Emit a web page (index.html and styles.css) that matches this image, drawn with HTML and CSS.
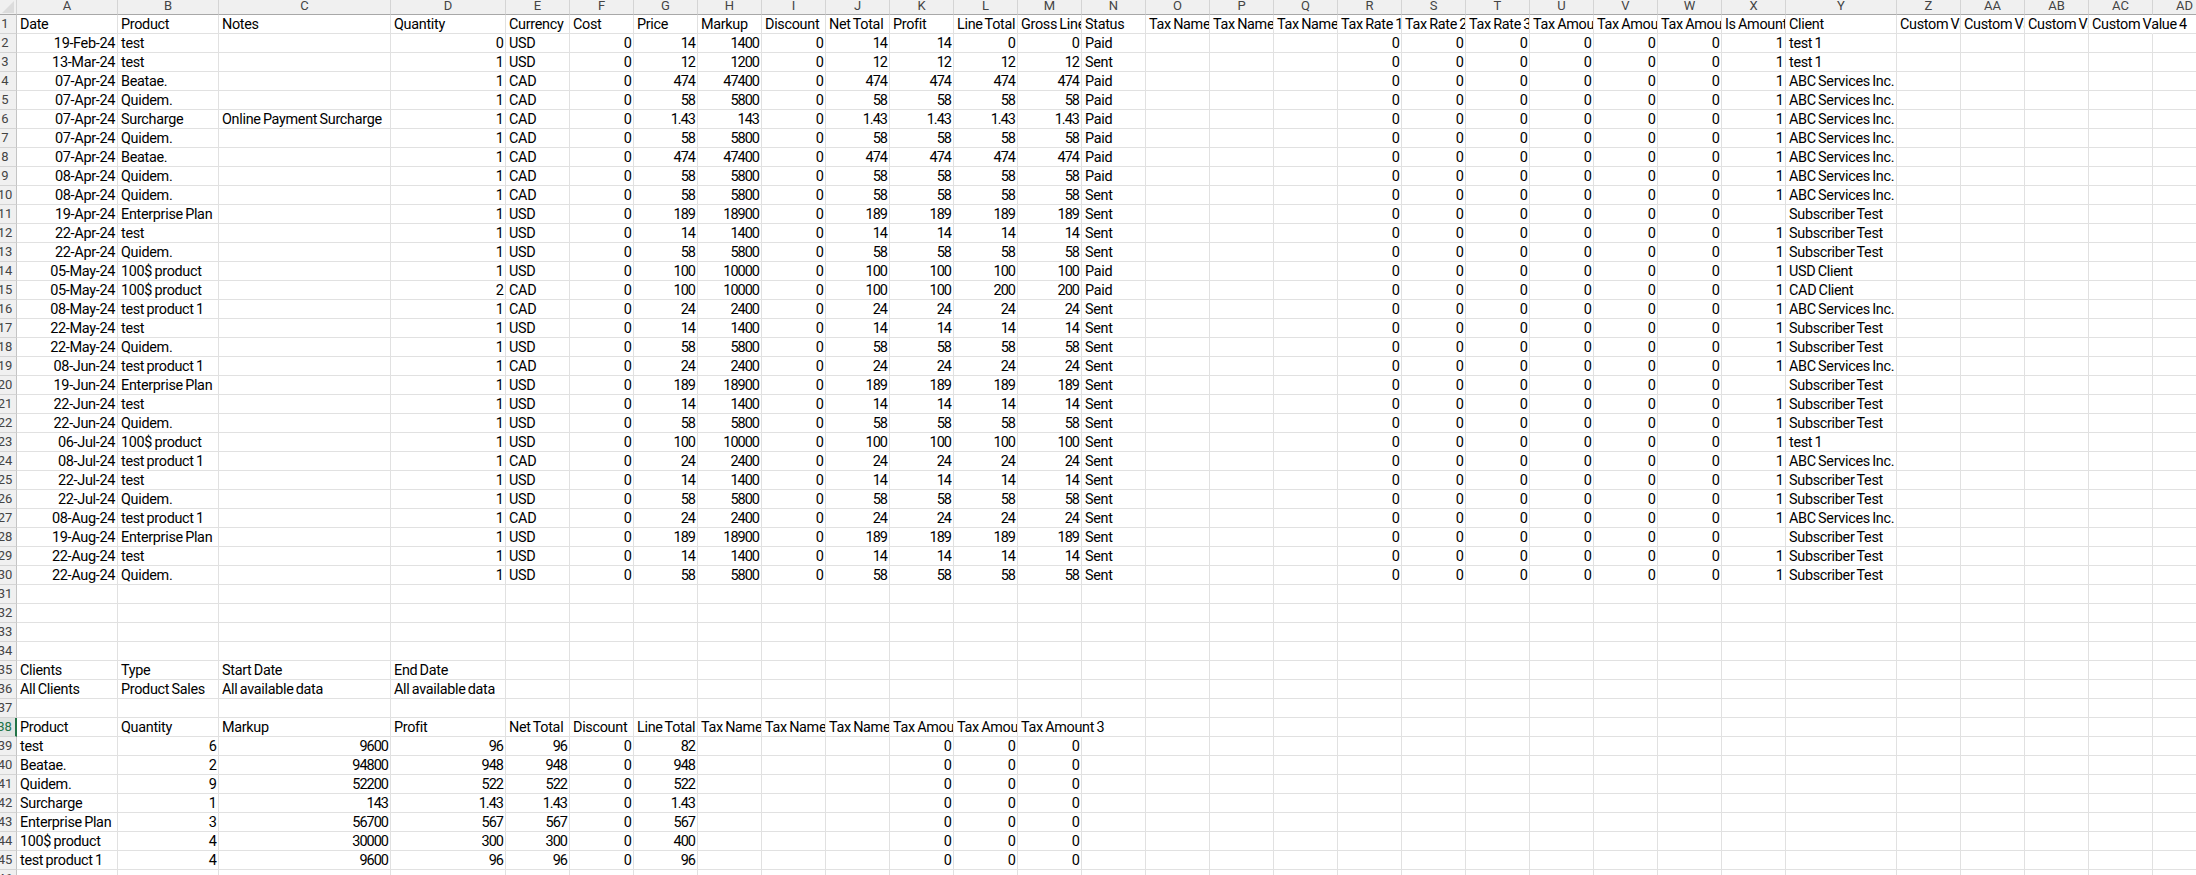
FILE: index.html
```html
<!DOCTYPE html>
<html lang="en">
<head>
<meta charset="utf-8">
<title>Product Sales Export</title>
<link rel="stylesheet" href="styles.css">
</head>
<body>
<table class="sheet">
<colgroup><col class="c-row"><col class="c-a"><col class="c-a"><col class="c-c"><col class="c-d"><col span="20" class="c-std"><col class="c-y"><col span="5" class="c-std"></colgroup>
<thead><tr class="letters"><th class="corner"><svg class="corner-mark" viewBox="0 0 12 12"><path d="M12 0V12H0Z"/></svg></th><th>A</th><th>B</th><th>C</th><th>D</th><th>E</th><th>F</th><th>G</th><th>H</th><th>I</th><th>J</th><th>K</th><th>L</th><th>M</th><th>N</th><th>O</th><th>P</th><th>Q</th><th>R</th><th>S</th><th>T</th><th>U</th><th>V</th><th>W</th><th>X</th><th>Y</th><th>Z</th><th>AA</th><th>AB</th><th>AC</th><th>AD</th></tr></thead>
<tbody>
<tr><th>1</th><td>Date</td><td>Product</td><td>Notes</td><td>Quantity</td><td>Currency</td><td>Cost</td><td>Price</td><td>Markup</td><td>Discount</td><td>Net Total</td><td>Profit</td><td>Line Total</td><td>Gross Line</td><td>Status</td><td>Tax Name</td><td>Tax Name</td><td>Tax Name</td><td>Tax Rate 1</td><td>Tax Rate 2</td><td>Tax Rate 3</td><td>Tax Amou</td><td>Tax Amou</td><td>Tax Amou</td><td>Is Amount</td><td>Client</td><td>Custom Va</td><td>Custom Va</td><td>Custom Va</td><td class="spill">Custom Value 4</td><td></td></tr>
<tr><th>2</th><td class="d">19-Feb-24</td><td>test</td><td></td><td class="n">0</td><td>USD</td><td class="n">0</td><td class="n">14</td><td class="n">1400</td><td class="n">0</td><td class="n">14</td><td class="n">14</td><td class="n">0</td><td class="n">0</td><td>Paid</td><td></td><td></td><td></td><td class="n">0</td><td class="n">0</td><td class="n">0</td><td class="n">0</td><td class="n">0</td><td class="n">0</td><td class="n">1</td><td>test 1</td><td></td><td></td><td></td><td></td><td></td></tr>
<tr><th>3</th><td class="d">13-Mar-24</td><td>test</td><td></td><td class="n">1</td><td>USD</td><td class="n">0</td><td class="n">12</td><td class="n">1200</td><td class="n">0</td><td class="n">12</td><td class="n">12</td><td class="n">12</td><td class="n">12</td><td>Sent</td><td></td><td></td><td></td><td class="n">0</td><td class="n">0</td><td class="n">0</td><td class="n">0</td><td class="n">0</td><td class="n">0</td><td class="n">1</td><td>test 1</td><td></td><td></td><td></td><td></td><td></td></tr>
<tr><th>4</th><td class="d">07-Apr-24</td><td>Beatae.</td><td></td><td class="n">1</td><td>CAD</td><td class="n">0</td><td class="n">474</td><td class="n">47400</td><td class="n">0</td><td class="n">474</td><td class="n">474</td><td class="n">474</td><td class="n">474</td><td>Paid</td><td></td><td></td><td></td><td class="n">0</td><td class="n">0</td><td class="n">0</td><td class="n">0</td><td class="n">0</td><td class="n">0</td><td class="n">1</td><td>ABC Services Inc.</td><td></td><td></td><td></td><td></td><td></td></tr>
<tr><th>5</th><td class="d">07-Apr-24</td><td>Quidem.</td><td></td><td class="n">1</td><td>CAD</td><td class="n">0</td><td class="n">58</td><td class="n">5800</td><td class="n">0</td><td class="n">58</td><td class="n">58</td><td class="n">58</td><td class="n">58</td><td>Paid</td><td></td><td></td><td></td><td class="n">0</td><td class="n">0</td><td class="n">0</td><td class="n">0</td><td class="n">0</td><td class="n">0</td><td class="n">1</td><td>ABC Services Inc.</td><td></td><td></td><td></td><td></td><td></td></tr>
<tr><th>6</th><td class="d">07-Apr-24</td><td>Surcharge</td><td>Online Payment Surcharge</td><td class="n">1</td><td>CAD</td><td class="n">0</td><td class="n">1.43</td><td class="n">143</td><td class="n">0</td><td class="n">1.43</td><td class="n">1.43</td><td class="n">1.43</td><td class="n">1.43</td><td>Paid</td><td></td><td></td><td></td><td class="n">0</td><td class="n">0</td><td class="n">0</td><td class="n">0</td><td class="n">0</td><td class="n">0</td><td class="n">1</td><td>ABC Services Inc.</td><td></td><td></td><td></td><td></td><td></td></tr>
<tr><th>7</th><td class="d">07-Apr-24</td><td>Quidem.</td><td></td><td class="n">1</td><td>CAD</td><td class="n">0</td><td class="n">58</td><td class="n">5800</td><td class="n">0</td><td class="n">58</td><td class="n">58</td><td class="n">58</td><td class="n">58</td><td>Paid</td><td></td><td></td><td></td><td class="n">0</td><td class="n">0</td><td class="n">0</td><td class="n">0</td><td class="n">0</td><td class="n">0</td><td class="n">1</td><td>ABC Services Inc.</td><td></td><td></td><td></td><td></td><td></td></tr>
<tr><th>8</th><td class="d">07-Apr-24</td><td>Beatae.</td><td></td><td class="n">1</td><td>CAD</td><td class="n">0</td><td class="n">474</td><td class="n">47400</td><td class="n">0</td><td class="n">474</td><td class="n">474</td><td class="n">474</td><td class="n">474</td><td>Paid</td><td></td><td></td><td></td><td class="n">0</td><td class="n">0</td><td class="n">0</td><td class="n">0</td><td class="n">0</td><td class="n">0</td><td class="n">1</td><td>ABC Services Inc.</td><td></td><td></td><td></td><td></td><td></td></tr>
<tr><th>9</th><td class="d">08-Apr-24</td><td>Quidem.</td><td></td><td class="n">1</td><td>CAD</td><td class="n">0</td><td class="n">58</td><td class="n">5800</td><td class="n">0</td><td class="n">58</td><td class="n">58</td><td class="n">58</td><td class="n">58</td><td>Paid</td><td></td><td></td><td></td><td class="n">0</td><td class="n">0</td><td class="n">0</td><td class="n">0</td><td class="n">0</td><td class="n">0</td><td class="n">1</td><td>ABC Services Inc.</td><td></td><td></td><td></td><td></td><td></td></tr>
<tr><th>10</th><td class="d">08-Apr-24</td><td>Quidem.</td><td></td><td class="n">1</td><td>CAD</td><td class="n">0</td><td class="n">58</td><td class="n">5800</td><td class="n">0</td><td class="n">58</td><td class="n">58</td><td class="n">58</td><td class="n">58</td><td>Sent</td><td></td><td></td><td></td><td class="n">0</td><td class="n">0</td><td class="n">0</td><td class="n">0</td><td class="n">0</td><td class="n">0</td><td class="n">1</td><td>ABC Services Inc.</td><td></td><td></td><td></td><td></td><td></td></tr>
<tr><th>11</th><td class="d">19-Apr-24</td><td>Enterprise Plan</td><td></td><td class="n">1</td><td>USD</td><td class="n">0</td><td class="n">189</td><td class="n">18900</td><td class="n">0</td><td class="n">189</td><td class="n">189</td><td class="n">189</td><td class="n">189</td><td>Sent</td><td></td><td></td><td></td><td class="n">0</td><td class="n">0</td><td class="n">0</td><td class="n">0</td><td class="n">0</td><td class="n">0</td><td></td><td>Subscriber Test</td><td></td><td></td><td></td><td></td><td></td></tr>
<tr><th>12</th><td class="d">22-Apr-24</td><td>test</td><td></td><td class="n">1</td><td>USD</td><td class="n">0</td><td class="n">14</td><td class="n">1400</td><td class="n">0</td><td class="n">14</td><td class="n">14</td><td class="n">14</td><td class="n">14</td><td>Sent</td><td></td><td></td><td></td><td class="n">0</td><td class="n">0</td><td class="n">0</td><td class="n">0</td><td class="n">0</td><td class="n">0</td><td class="n">1</td><td>Subscriber Test</td><td></td><td></td><td></td><td></td><td></td></tr>
<tr><th>13</th><td class="d">22-Apr-24</td><td>Quidem.</td><td></td><td class="n">1</td><td>USD</td><td class="n">0</td><td class="n">58</td><td class="n">5800</td><td class="n">0</td><td class="n">58</td><td class="n">58</td><td class="n">58</td><td class="n">58</td><td>Sent</td><td></td><td></td><td></td><td class="n">0</td><td class="n">0</td><td class="n">0</td><td class="n">0</td><td class="n">0</td><td class="n">0</td><td class="n">1</td><td>Subscriber Test</td><td></td><td></td><td></td><td></td><td></td></tr>
<tr><th>14</th><td class="d">05-May-24</td><td>100$ product</td><td></td><td class="n">1</td><td>USD</td><td class="n">0</td><td class="n">100</td><td class="n">10000</td><td class="n">0</td><td class="n">100</td><td class="n">100</td><td class="n">100</td><td class="n">100</td><td>Paid</td><td></td><td></td><td></td><td class="n">0</td><td class="n">0</td><td class="n">0</td><td class="n">0</td><td class="n">0</td><td class="n">0</td><td class="n">1</td><td>USD Client</td><td></td><td></td><td></td><td></td><td></td></tr>
<tr><th>15</th><td class="d">05-May-24</td><td>100$ product</td><td></td><td class="n">2</td><td>CAD</td><td class="n">0</td><td class="n">100</td><td class="n">10000</td><td class="n">0</td><td class="n">100</td><td class="n">100</td><td class="n">200</td><td class="n">200</td><td>Paid</td><td></td><td></td><td></td><td class="n">0</td><td class="n">0</td><td class="n">0</td><td class="n">0</td><td class="n">0</td><td class="n">0</td><td class="n">1</td><td>CAD Client</td><td></td><td></td><td></td><td></td><td></td></tr>
<tr><th>16</th><td class="d">08-May-24</td><td>test product 1</td><td></td><td class="n">1</td><td>CAD</td><td class="n">0</td><td class="n">24</td><td class="n">2400</td><td class="n">0</td><td class="n">24</td><td class="n">24</td><td class="n">24</td><td class="n">24</td><td>Sent</td><td></td><td></td><td></td><td class="n">0</td><td class="n">0</td><td class="n">0</td><td class="n">0</td><td class="n">0</td><td class="n">0</td><td class="n">1</td><td>ABC Services Inc.</td><td></td><td></td><td></td><td></td><td></td></tr>
<tr><th>17</th><td class="d">22-May-24</td><td>test</td><td></td><td class="n">1</td><td>USD</td><td class="n">0</td><td class="n">14</td><td class="n">1400</td><td class="n">0</td><td class="n">14</td><td class="n">14</td><td class="n">14</td><td class="n">14</td><td>Sent</td><td></td><td></td><td></td><td class="n">0</td><td class="n">0</td><td class="n">0</td><td class="n">0</td><td class="n">0</td><td class="n">0</td><td class="n">1</td><td>Subscriber Test</td><td></td><td></td><td></td><td></td><td></td></tr>
<tr><th>18</th><td class="d">22-May-24</td><td>Quidem.</td><td></td><td class="n">1</td><td>USD</td><td class="n">0</td><td class="n">58</td><td class="n">5800</td><td class="n">0</td><td class="n">58</td><td class="n">58</td><td class="n">58</td><td class="n">58</td><td>Sent</td><td></td><td></td><td></td><td class="n">0</td><td class="n">0</td><td class="n">0</td><td class="n">0</td><td class="n">0</td><td class="n">0</td><td class="n">1</td><td>Subscriber Test</td><td></td><td></td><td></td><td></td><td></td></tr>
<tr><th>19</th><td class="d">08-Jun-24</td><td>test product 1</td><td></td><td class="n">1</td><td>CAD</td><td class="n">0</td><td class="n">24</td><td class="n">2400</td><td class="n">0</td><td class="n">24</td><td class="n">24</td><td class="n">24</td><td class="n">24</td><td>Sent</td><td></td><td></td><td></td><td class="n">0</td><td class="n">0</td><td class="n">0</td><td class="n">0</td><td class="n">0</td><td class="n">0</td><td class="n">1</td><td>ABC Services Inc.</td><td></td><td></td><td></td><td></td><td></td></tr>
<tr><th>20</th><td class="d">19-Jun-24</td><td>Enterprise Plan</td><td></td><td class="n">1</td><td>USD</td><td class="n">0</td><td class="n">189</td><td class="n">18900</td><td class="n">0</td><td class="n">189</td><td class="n">189</td><td class="n">189</td><td class="n">189</td><td>Sent</td><td></td><td></td><td></td><td class="n">0</td><td class="n">0</td><td class="n">0</td><td class="n">0</td><td class="n">0</td><td class="n">0</td><td></td><td>Subscriber Test</td><td></td><td></td><td></td><td></td><td></td></tr>
<tr><th>21</th><td class="d">22-Jun-24</td><td>test</td><td></td><td class="n">1</td><td>USD</td><td class="n">0</td><td class="n">14</td><td class="n">1400</td><td class="n">0</td><td class="n">14</td><td class="n">14</td><td class="n">14</td><td class="n">14</td><td>Sent</td><td></td><td></td><td></td><td class="n">0</td><td class="n">0</td><td class="n">0</td><td class="n">0</td><td class="n">0</td><td class="n">0</td><td class="n">1</td><td>Subscriber Test</td><td></td><td></td><td></td><td></td><td></td></tr>
<tr><th>22</th><td class="d">22-Jun-24</td><td>Quidem.</td><td></td><td class="n">1</td><td>USD</td><td class="n">0</td><td class="n">58</td><td class="n">5800</td><td class="n">0</td><td class="n">58</td><td class="n">58</td><td class="n">58</td><td class="n">58</td><td>Sent</td><td></td><td></td><td></td><td class="n">0</td><td class="n">0</td><td class="n">0</td><td class="n">0</td><td class="n">0</td><td class="n">0</td><td class="n">1</td><td>Subscriber Test</td><td></td><td></td><td></td><td></td><td></td></tr>
<tr><th>23</th><td class="d">06-Jul-24</td><td>100$ product</td><td></td><td class="n">1</td><td>USD</td><td class="n">0</td><td class="n">100</td><td class="n">10000</td><td class="n">0</td><td class="n">100</td><td class="n">100</td><td class="n">100</td><td class="n">100</td><td>Sent</td><td></td><td></td><td></td><td class="n">0</td><td class="n">0</td><td class="n">0</td><td class="n">0</td><td class="n">0</td><td class="n">0</td><td class="n">1</td><td>test 1</td><td></td><td></td><td></td><td></td><td></td></tr>
<tr><th>24</th><td class="d">08-Jul-24</td><td>test product 1</td><td></td><td class="n">1</td><td>CAD</td><td class="n">0</td><td class="n">24</td><td class="n">2400</td><td class="n">0</td><td class="n">24</td><td class="n">24</td><td class="n">24</td><td class="n">24</td><td>Sent</td><td></td><td></td><td></td><td class="n">0</td><td class="n">0</td><td class="n">0</td><td class="n">0</td><td class="n">0</td><td class="n">0</td><td class="n">1</td><td>ABC Services Inc.</td><td></td><td></td><td></td><td></td><td></td></tr>
<tr><th>25</th><td class="d">22-Jul-24</td><td>test</td><td></td><td class="n">1</td><td>USD</td><td class="n">0</td><td class="n">14</td><td class="n">1400</td><td class="n">0</td><td class="n">14</td><td class="n">14</td><td class="n">14</td><td class="n">14</td><td>Sent</td><td></td><td></td><td></td><td class="n">0</td><td class="n">0</td><td class="n">0</td><td class="n">0</td><td class="n">0</td><td class="n">0</td><td class="n">1</td><td>Subscriber Test</td><td></td><td></td><td></td><td></td><td></td></tr>
<tr><th>26</th><td class="d">22-Jul-24</td><td>Quidem.</td><td></td><td class="n">1</td><td>USD</td><td class="n">0</td><td class="n">58</td><td class="n">5800</td><td class="n">0</td><td class="n">58</td><td class="n">58</td><td class="n">58</td><td class="n">58</td><td>Sent</td><td></td><td></td><td></td><td class="n">0</td><td class="n">0</td><td class="n">0</td><td class="n">0</td><td class="n">0</td><td class="n">0</td><td class="n">1</td><td>Subscriber Test</td><td></td><td></td><td></td><td></td><td></td></tr>
<tr><th>27</th><td class="d">08-Aug-24</td><td>test product 1</td><td></td><td class="n">1</td><td>CAD</td><td class="n">0</td><td class="n">24</td><td class="n">2400</td><td class="n">0</td><td class="n">24</td><td class="n">24</td><td class="n">24</td><td class="n">24</td><td>Sent</td><td></td><td></td><td></td><td class="n">0</td><td class="n">0</td><td class="n">0</td><td class="n">0</td><td class="n">0</td><td class="n">0</td><td class="n">1</td><td>ABC Services Inc.</td><td></td><td></td><td></td><td></td><td></td></tr>
<tr><th>28</th><td class="d">19-Aug-24</td><td>Enterprise Plan</td><td></td><td class="n">1</td><td>USD</td><td class="n">0</td><td class="n">189</td><td class="n">18900</td><td class="n">0</td><td class="n">189</td><td class="n">189</td><td class="n">189</td><td class="n">189</td><td>Sent</td><td></td><td></td><td></td><td class="n">0</td><td class="n">0</td><td class="n">0</td><td class="n">0</td><td class="n">0</td><td class="n">0</td><td></td><td>Subscriber Test</td><td></td><td></td><td></td><td></td><td></td></tr>
<tr><th>29</th><td class="d">22-Aug-24</td><td>test</td><td></td><td class="n">1</td><td>USD</td><td class="n">0</td><td class="n">14</td><td class="n">1400</td><td class="n">0</td><td class="n">14</td><td class="n">14</td><td class="n">14</td><td class="n">14</td><td>Sent</td><td></td><td></td><td></td><td class="n">0</td><td class="n">0</td><td class="n">0</td><td class="n">0</td><td class="n">0</td><td class="n">0</td><td class="n">1</td><td>Subscriber Test</td><td></td><td></td><td></td><td></td><td></td></tr>
<tr><th>30</th><td class="d">22-Aug-24</td><td>Quidem.</td><td></td><td class="n">1</td><td>USD</td><td class="n">0</td><td class="n">58</td><td class="n">5800</td><td class="n">0</td><td class="n">58</td><td class="n">58</td><td class="n">58</td><td class="n">58</td><td>Sent</td><td></td><td></td><td></td><td class="n">0</td><td class="n">0</td><td class="n">0</td><td class="n">0</td><td class="n">0</td><td class="n">0</td><td class="n">1</td><td>Subscriber Test</td><td></td><td></td><td></td><td></td><td></td></tr>
<tr><th>31</th><td></td><td></td><td></td><td></td><td></td><td></td><td></td><td></td><td></td><td></td><td></td><td></td><td></td><td></td><td></td><td></td><td></td><td></td><td></td><td></td><td></td><td></td><td></td><td></td><td></td><td></td><td></td><td></td><td></td><td></td></tr>
<tr><th>32</th><td></td><td></td><td></td><td></td><td></td><td></td><td></td><td></td><td></td><td></td><td></td><td></td><td></td><td></td><td></td><td></td><td></td><td></td><td></td><td></td><td></td><td></td><td></td><td></td><td></td><td></td><td></td><td></td><td></td><td></td></tr>
<tr><th>33</th><td></td><td></td><td></td><td></td><td></td><td></td><td></td><td></td><td></td><td></td><td></td><td></td><td></td><td></td><td></td><td></td><td></td><td></td><td></td><td></td><td></td><td></td><td></td><td></td><td></td><td></td><td></td><td></td><td></td><td></td></tr>
<tr><th>34</th><td></td><td></td><td></td><td></td><td></td><td></td><td></td><td></td><td></td><td></td><td></td><td></td><td></td><td></td><td></td><td></td><td></td><td></td><td></td><td></td><td></td><td></td><td></td><td></td><td></td><td></td><td></td><td></td><td></td><td></td></tr>
<tr><th>35</th><td>Clients</td><td>Type</td><td>Start Date</td><td>End Date</td><td></td><td></td><td></td><td></td><td></td><td></td><td></td><td></td><td></td><td></td><td></td><td></td><td></td><td></td><td></td><td></td><td></td><td></td><td></td><td></td><td></td><td></td><td></td><td></td><td></td><td></td></tr>
<tr><th>36</th><td>All Clients</td><td>Product Sales</td><td>All available data</td><td>All available data</td><td></td><td></td><td></td><td></td><td></td><td></td><td></td><td></td><td></td><td></td><td></td><td></td><td></td><td></td><td></td><td></td><td></td><td></td><td></td><td></td><td></td><td></td><td></td><td></td><td></td><td></td></tr>
<tr><th>37</th><td></td><td></td><td></td><td></td><td></td><td></td><td></td><td></td><td></td><td></td><td></td><td></td><td></td><td></td><td></td><td></td><td></td><td></td><td></td><td></td><td></td><td></td><td></td><td></td><td></td><td></td><td></td><td></td><td></td><td></td></tr>
<tr><th class="active">38</th><td>Product</td><td>Quantity</td><td>Markup</td><td>Profit</td><td>Net Total</td><td>Discount</td><td>Line Total</td><td>Tax Name</td><td>Tax Name</td><td>Tax Name</td><td>Tax Amou</td><td>Tax Amou</td><td class="spill">Tax Amount 3</td><td></td><td></td><td></td><td></td><td></td><td></td><td></td><td></td><td></td><td></td><td></td><td></td><td></td><td></td><td></td><td></td><td></td></tr>
<tr><th>39</th><td>test</td><td class="n">6</td><td class="n">9600</td><td class="n">96</td><td class="n">96</td><td class="n">0</td><td class="n">82</td><td></td><td></td><td></td><td class="n">0</td><td class="n">0</td><td class="n">0</td><td></td><td></td><td></td><td></td><td></td><td></td><td></td><td></td><td></td><td></td><td></td><td></td><td></td><td></td><td></td><td></td><td></td></tr>
<tr><th>40</th><td>Beatae.</td><td class="n">2</td><td class="n">94800</td><td class="n">948</td><td class="n">948</td><td class="n">0</td><td class="n">948</td><td></td><td></td><td></td><td class="n">0</td><td class="n">0</td><td class="n">0</td><td></td><td></td><td></td><td></td><td></td><td></td><td></td><td></td><td></td><td></td><td></td><td></td><td></td><td></td><td></td><td></td><td></td></tr>
<tr><th>41</th><td>Quidem.</td><td class="n">9</td><td class="n">52200</td><td class="n">522</td><td class="n">522</td><td class="n">0</td><td class="n">522</td><td></td><td></td><td></td><td class="n">0</td><td class="n">0</td><td class="n">0</td><td></td><td></td><td></td><td></td><td></td><td></td><td></td><td></td><td></td><td></td><td></td><td></td><td></td><td></td><td></td><td></td><td></td></tr>
<tr><th>42</th><td>Surcharge</td><td class="n">1</td><td class="n">143</td><td class="n">1.43</td><td class="n">1.43</td><td class="n">0</td><td class="n">1.43</td><td></td><td></td><td></td><td class="n">0</td><td class="n">0</td><td class="n">0</td><td></td><td></td><td></td><td></td><td></td><td></td><td></td><td></td><td></td><td></td><td></td><td></td><td></td><td></td><td></td><td></td><td></td></tr>
<tr><th>43</th><td>Enterprise Plan</td><td class="n">3</td><td class="n">56700</td><td class="n">567</td><td class="n">567</td><td class="n">0</td><td class="n">567</td><td></td><td></td><td></td><td class="n">0</td><td class="n">0</td><td class="n">0</td><td></td><td></td><td></td><td></td><td></td><td></td><td></td><td></td><td></td><td></td><td></td><td></td><td></td><td></td><td></td><td></td><td></td></tr>
<tr><th>44</th><td>100$ product</td><td class="n">4</td><td class="n">30000</td><td class="n">300</td><td class="n">300</td><td class="n">0</td><td class="n">400</td><td></td><td></td><td></td><td class="n">0</td><td class="n">0</td><td class="n">0</td><td></td><td></td><td></td><td></td><td></td><td></td><td></td><td></td><td></td><td></td><td></td><td></td><td></td><td></td><td></td><td></td><td></td></tr>
<tr><th>45</th><td>test product 1</td><td class="n">4</td><td class="n">9600</td><td class="n">96</td><td class="n">96</td><td class="n">0</td><td class="n">96</td><td></td><td></td><td></td><td class="n">0</td><td class="n">0</td><td class="n">0</td><td></td><td></td><td></td><td></td><td></td><td></td><td></td><td></td><td></td><td></td><td></td><td></td><td></td><td></td><td></td><td></td><td></td></tr>
<tr><th>46</th><td></td><td></td><td></td><td></td><td></td><td></td><td></td><td></td><td></td><td></td><td></td><td></td><td></td><td></td><td></td><td></td><td></td><td></td><td></td><td></td><td></td><td></td><td></td><td></td><td></td><td></td><td></td><td></td><td></td><td></td></tr>
</tbody>
</table>
</body>
</html>
```
FILE: styles.css
```css
html, body {
  margin: 0;
  height: 100%;
  overflow: hidden;
  background: #fff;
}

.sheet {
  --grid: #e1e1e1;
  table-layout: fixed;
  width: 2223px;
  margin-left: -6px;
  border-collapse: separate;
  border-spacing: 0;
  font: 14.4px/16px Roboto, "Liberation Sans", sans-serif;
  letter-spacing: -0.3px;
  word-spacing: -1px;
  color: #000;
}

.c-row { width: 23px; }
.c-a { width: 101px; }
.c-c { width: 172px; }
.c-d { width: 115px; }
.c-std { width: 64px; }
.c-y { width: 111px; }

.sheet td {
  box-sizing: border-box;
  height: 19px;
  padding: 2px 2px 0 3px;
  border-right: 1px solid var(--grid);
  border-bottom: 1px solid var(--grid);
  vertical-align: top;
  white-space: nowrap;
  overflow: hidden;
}

.sheet td.n,
.sheet td.d {
  padding-right: 2px;
  font-size: 14.5px;
  text-align: right;
}

.sheet td.n { letter-spacing: -1px; }
.sheet td.d { letter-spacing: -0.35px; }

.sheet td.spill {
  overflow: visible;
  border-right-color: transparent;
}

.sheet tbody th {
  box-sizing: border-box;
  height: 19px;
  padding: 0;
  background: #f0f0f0;
  border-right: 1px solid #c4c4c4;
  border-bottom: 1px solid #d4d4d4;
  font: 13px/18px Roboto, "Liberation Sans", sans-serif;
  letter-spacing: 0;
  color: #444;
  text-align: center;
  overflow: hidden;
}

.sheet tbody th.active {
  background: #e1e4e2;
  color: #217346;
  border-right: 2px solid #217346;
}

.letters th {
  box-sizing: border-box;
  height: 15px;
  padding: 0;
  background: #f0f0f0;
  border-right: 1px solid #d4d4d4;
  border-bottom: 1px solid #a8a8a8;
  font: 400 13px/12px Roboto, "Liberation Sans", sans-serif;
  letter-spacing: 0;
  color: #444;
  text-align: center;
  vertical-align: top;
}

.letters th.corner {
  position: relative;
}

.corner-mark {
  position: absolute;
  right: 2px;
  bottom: 1px;
  width: 12px;
  height: 12px;
  fill: #dcdcdc;
}
```
